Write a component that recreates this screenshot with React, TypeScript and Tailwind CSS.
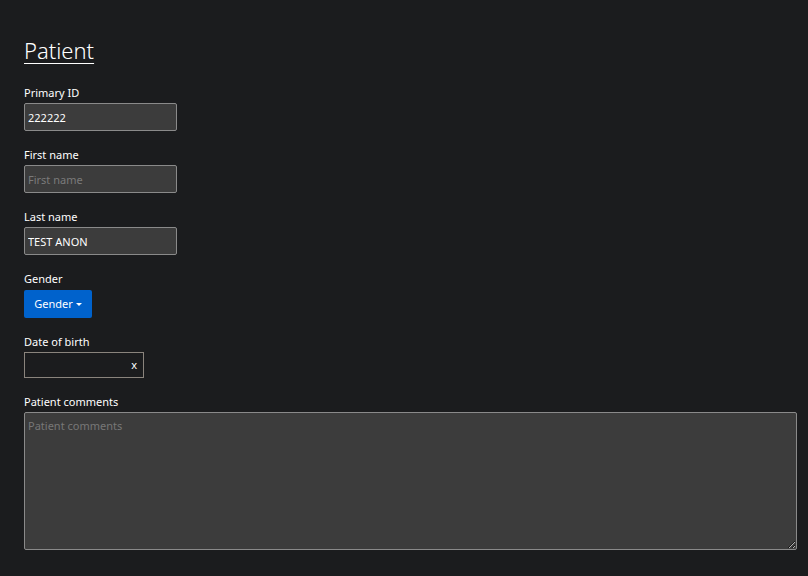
import React from "react";

const font = { fontFamily: '"Noto Sans", "Open Sans", sans-serif' };

function Field({ label, children }: { label: string; children: React.ReactNode }) {
  return (
    <div className="flex flex-col">
      <label className="text-[11px] leading-[16px] text-white">{label}</label>
      {children}
    </div>
  );
}

export default function App() {
  return (
    <div className="min-h-[576px] w-[808px] bg-[#1b1c1e] pl-[24px] pr-[11px] pt-[34px] pb-[26px]" style={font}>
      <h1 className="text-[22px] font-light leading-[32px] text-white underline decoration-1 underline-offset-[4px]">
        Patient
      </h1>
      <div className="mt-[19px] flex flex-col gap-[16px]">
        <Field label="Primary ID">
          <input
            className="mt-[2px] h-[28px] w-[153px] rounded-[2px] border border-[#8a8a8a] bg-[#3c3c3c] px-[3px] text-[11px] text-white outline-none"
            defaultValue="222222"
          />
        </Field>
        <Field label="First name">
          <input
            className="mt-[2px] h-[28px] w-[153px] rounded-[2px] border border-[#8a8a8a] bg-[#3c3c3c] px-[3px] text-[11px] text-white outline-none placeholder:text-[#7a7a7a]"
            placeholder="First name"
          />
        </Field>
        <Field label="Last name">
          <input
            className="mt-[2px] h-[28px] w-[153px] rounded-[2px] border border-[#8a8a8a] bg-[#3c3c3c] px-[3px] text-[11px] text-white outline-none"
            defaultValue="TEST ANON"
          />
        </Field>
        <Field label="Gender">
          <div className="mt-[3px]">
            <button className="flex h-[28px] w-[68px] items-center justify-center gap-[3px] rounded-[2px] bg-[#0062cc] pt-[1px] text-[11px] text-white">
              <span>Gender</span>
              <svg width="6" height="4" viewBox="0 0 6 4">
                <path d="M0 0 L6 0 L3 3 Z" fill="white" />
              </svg>
            </button>
          </div>
        </Field>
        <Field label="Date of birth">
          <div className="mt-[2px] flex h-[26px] w-[120px] items-center justify-end border border-[#8a847d] pr-[6px]">
            <span className="text-[11px] text-white">x</span>
          </div>
        </Field>
        <Field label="Patient comments">
          <textarea
            className="mt-[2px] h-[138px] w-full resize-y rounded-[2px] border border-[#8a8a8a] bg-[#3c3c3c] px-[3px] py-[5px] text-[11px] text-white outline-none placeholder:text-[#777777]"
            placeholder="Patient comments"
          />
        </Field>
      </div>
    </div>
  );
}
